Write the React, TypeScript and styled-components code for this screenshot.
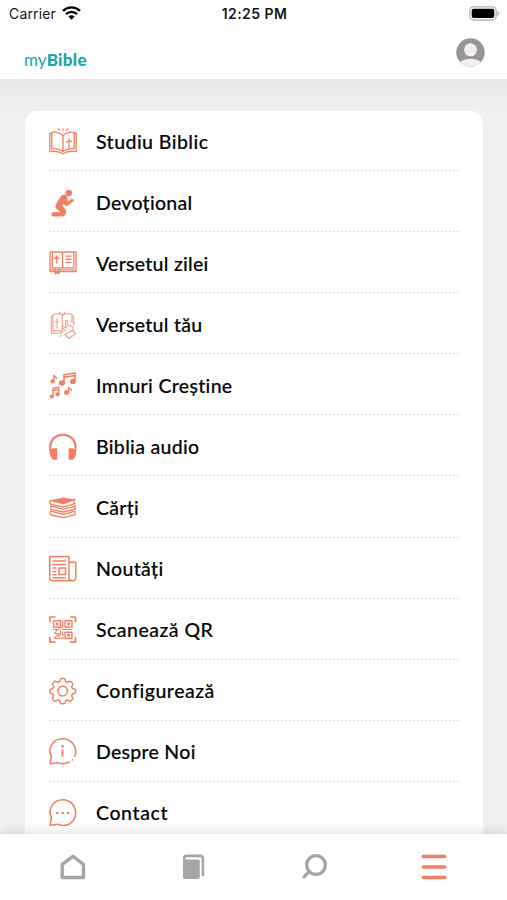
import React from "react";
import styled, { createGlobalStyle } from "styled-components";

const CORAL = "#f27f63";
const GREY = "#a6a6a6";

const GlobalStyle = createGlobalStyle`
  * { box-sizing: border-box; }
  body { margin: 0; background: #f0f0f0; overflow: hidden; }
`;

const Screen = styled.div`
  width: 507px;
  height: 900px;
  display: flex;
  flex-direction: column;
  overflow: hidden;
  background: #f0f0f0;
  font-family: Lato, "Open Sans", sans-serif;
`;

const Header = styled.header`
  flex: none;
  height: 79px;
  background: #fff;
`;

const StatusBar = styled.div`
  height: 27px;
  display: grid;
  grid-template-columns: 1fr auto 1fr;
  align-items: center;
  padding: 0 7px 0 9px;
  font-family: Inter, sans-serif;
  color: #161616;
`;

const Carrier = styled.div`
  display: flex;
  align-items: center;
  gap: 6px;
  font-size: 14px;
  letter-spacing: 0.15px;
  svg { margin-top: -2px; }
`;

const Clock = styled.div`
  font-size: 14px;
  font-weight: 600;
  letter-spacing: 0.45px;
`;

const Battery = styled.svg`
  justify-self: end;
  display: block;
  margin-top: -1px;
`;

const Brand = styled.div`
  height: 52px;
  display: flex;
  align-items: flex-start;
  justify-content: space-between;
  padding: 11px 22px 0 24px;
`;

const Logo = styled.div`
  padding-top: 11px;
  font-size: 17px;
  line-height: 21px;
  letter-spacing: 0.05px;
  color: #16a5ab;
  b { font-weight: 900; letter-spacing: 0.3px; }
`;

const Content = styled.main`
  flex: 1;
  min-height: 0;
  overflow: hidden;
  padding: 32px 24px 0 25px;
  background: linear-gradient(#e7e7e7 0, #ebebeb 12px, #f0f0f0 34px);
`;

const Card = styled.ul`
  margin: 0;
  padding: 0 24px;
  list-style: none;
  height: 760px;
  border-radius: 12px;
  background: #fff;
`;

const Row = styled.li`
  height: 61.1px;
  display: flex;
  align-items: center;
  gap: 19px;
  padding-top: 2px;
  background: repeating-linear-gradient(90deg, #d9d9d9 0 2px, #fff 2px 4px) 0 100% / 100% 1px no-repeat;
  &:first-child { height: 60px; }
  &:last-child { background: none; }
`;

const RowIcon = styled.svg`
  flex: none;
  display: block;
  width: 28px;
  height: 28px;
  fill: none;
  stroke: ${CORAL};
  stroke-width: 1.5;
  stroke-linecap: round;
  stroke-linejoin: round;
  overflow: visible;
  .solid { fill: ${CORAL}; stroke: none; }
  .faint { opacity: 0.75; }
`;

const Label = styled.span<{ $track: number }>`
  font-size: 19.5px;
  font-weight: 500;
  line-height: 26px;
  letter-spacing: ${(p) => p.$track}px;
  white-space: nowrap;
  color: #050505;
  -webkit-text-stroke: 0.15px #050505;
`;

const TabBar = styled.nav`
  flex: none;
  position: relative;
  height: 66px;
  display: grid;
  grid-template-columns: repeat(4, 120.4px);
  justify-content: center;
  padding-top: 18px;
  background: #fff;
  box-shadow: 0 -1px 10px rgba(0, 0, 0, 0.16);
`;

const Tab = styled.a<{ $active?: boolean }>`
  display: flex;
  justify-content: center;
  color: ${(p) => (p.$active ? CORAL : GREY)};
  svg { display: block; fill: none; stroke: currentColor; }
`;

const studyIcon = (
  <>
    <path d="M2.600 5.500H.8v18.200c4.500-1 9-.3 13.200 2 4.200-2.300 8.700-3 13.200-2V5.500h-1.800" strokeWidth="1.300" />
    <path d="M2.800 20.800V4.300C7.500 3.800 11.500 5 14 7.600c2.500-2.600 6.500-3.800 11.200-3.300v16.500C20 20 16.800 21.400 14 23.500 11.200 21.400 8 20 2.800 20.800zM14 7.600v16" strokeWidth="1.300" />
    <path d="M20 10.800v9M17.500 14l5.200-.8M14 .8v1.500M9 .6l1.600 1.700M19 .6l-1.600 1.700" strokeWidth="1.300" />
  </>
);

const prayIcon = (
  <>
    <circle className="solid" cx="19.800" cy="4" r="3.200" />
    <path className="solid" d="M13.200 6.300c2-1.500 4.400-.5 4.900 1.500l.7 4.600 3.900-2.300c1.500-.7 2.800.8 1.800 2.200l-5.800 4.500c-1.400.9-2.800.3-3.400-1l-.5-1.500-1.500 3 3.300 3.300c1.200 1.500.5 4-.9 5.700-.8 1-1.500 1.200-2.900 1.200H4.500c-2.700 0-2.700-4 0-4.200l6.800-.2-3.600-3.300c-1.600-1.500-1.500-2.800-.7-4.300 1.500-3 3.300-6.800 6.200-9.200z" />
  </>
);

const verseIcon = (
  <>
    <path d="M12.300 2H1v19.600h26V2H14.700L13.500 3.300zM13.500 3.300v14.500M3.300 2.300v15.500h21.500V2.300M1 19.800h26" strokeWidth="1.300" />
    <path d="M7.800 6.100v7M5.500 8.300h4.600M17 6.100h5.200M17 9.300h5.200M17 12.500h5.200M6.300 18.800v5l1.900-1.400 1.900 1.400v-5" strokeWidth="1.400" />
  </>
);

const yourVerseIcon = (
  <g className="faint" strokeWidth="1.100">
    <path d="M13.300 4.200C10 2.500 6.500 2.400 4 3.500v16.800c3-1.100 6-.9 9.300.6M13.300 4.200C16 2.500 20 2.400 23 3.500v8M13.300 4.200v16M4 5H2.300v17.300h10M23 5h1.700v9" />
    <path d="M8 8v9M6 10.700h4M10.500 1v2h5V1" />
    <path d="m16.500 20-2.800-3.200c-.8-1 .4-2 1.500-1.200l2.100 1.700-1-6.800c0-1.500 1.700-1.500 2 0l.9 4.500c2.300-1 4.400 0 4.600 1.600l.5 3.200M15.800 23.500l7.300-4 3.500 3-6.500 5z" />
    <circle className="solid" cx="11.700" cy="24.800" r=".9" />
  </g>
);

const musicIcon = (
  <>
    <path d="M15 11V2.800L26 1v8.500M15 5.200l11-1.700" strokeWidth="1.600" />
    <ellipse className="solid" cx="12.900" cy="11" rx="3.100" ry="2.700" />
    <ellipse className="solid" cx="23.800" cy="9.600" rx="2.900" ry="2.600" />
    <path d="M4.900 8.800V3.300c.6 1.500 2.500 1.300 2.500 3.300M4 24v-7.500l5.800-1.300v7M4 18.700l5.800-1.300M19.700 20.500v-5c.4 1.500 3 1 2.500 3" strokeWidth="1.400" />
    <circle className="solid" cx="3.500" cy="9.400" r="2.100" />
    <circle className="solid" cx="2.700" cy="24.500" r="2.100" />
    <circle className="solid" cx="8.500" cy="22.300" r="2.100" />
    <circle className="solid" cx="17.500" cy="20.600" r="2.500" />
  </>
);

const headphoneIcon = (
  <>
    <path d="M2.400 21C-1.300 9.500 4.500 1.800 13.900 1.800S29.100 9.500 25.400 21" strokeWidth="2.200" />
    <rect className="solid" x="3.500" y="15.200" width="4.700" height="11.600" rx=".8" />
    <rect className="solid" x="19.600" y="15.200" width="4.700" height="11.600" rx=".8" />
    <path className="solid" d="M4 15.500C1 15.800.2 18.600 1 21.700c.5 2 1.200 3.700 3 4.300zM23.800 15.500c3 .3 3.800 3.100 3 6.200-.5 2-1.200 3.700-3 4.300z" />
  </>
);

const booksIcon = (
  <>
    <path className="solid" d="m1.500 6.300 13-2.900 11.500 2-11.800 4.300z" />
    <path d="M1.500 6.300c-1 1.400-.8 2.900.4 4l12.300 2.600 12-3.300M26 5.400 14.200 9.700 1.500 6.300M24.900 6v3.800" strokeWidth="1.300" />
    <path d="M2.500 11.700c-1.500 1.200-1.200 3 0 4l12 2.300 12-3M2 12l12.500 3.200L26.200 12v3" strokeWidth="1.300" />
    <path d="M1.800 17c-1.200 1.300-1 3 .2 4l12.500 2.600 11.700-3M1.800 17.200l12.700 3.200L26 17.100v3.500" strokeWidth="1.300" />
  </>
);

const newsIcon = (
  <path d="M20 25.800H4c-2 0-3.200-1.300-3.200-3.300V1.500H20v21c0 4.300 6.800 4.300 6.800 0V7.200H20M23.500 25.800H20M4 6h12.500M4 9.500h12.500M10 13h6.500v6.400H10zM4 13h2.700M4 16.500h2.700M4 19.700h2.700M4 22.700h12.500" strokeWidth="1.500" />
);

const qrIcon = (
  <>
    <path d="M1 6.500V1h5.500M21 1h5.500v5.500M1 20.800v5.400h5.500M21 26.200h5.500v-5.400" strokeWidth="1.700" strokeLinecap="butt" />
    <path d="M4.500 4.700h7V11h-7zM16 4.700h7V11h-7zM16 16.200h7v6h-7zM7.300 7.200h1.400v1.300H7.300zM18.900 7.200h1.400v1.300h-1.400zM18.900 18.500h1.400v1.300h-1.400z" strokeWidth="1.400" />
    <path d="M4.500 13.500h5l1-1.300M8.500 13.500l-3 4h4.300l-4.500 4.700h6M11.500 14.800v3.500l-2 1.900M13.800 5v5.200l-1.300 2M13.500 13.500H23M13.500 16v3h1M12.800 22.200h2" strokeWidth="1.200" />
  </>
);

const gearIcon = (
  <g transform="translate(1.350 .6) scale(.9)">
    <path d="M12.200 1h3c.7 0 1 .4 1.200 1.100l.6 2.400 2.100.9 2.200-1.300c.6-.3 1-.3 1.500.2l1.900 1.900c.5.500.5 1 .2 1.500l-1.300 2.200.9 2.100 2.400.6c.7.200 1 .6 1 1.200v2.600c0 .7-.3 1-1 1.200l-2.400.6-.9 2.100 1.300 2.200c.3.600.3 1-.2 1.500l-1.900 1.900c-.5.500-1 .5-1.500.2l-2.200-1.300-2.100.9-.6 2.400c-.2.700-.5 1-1.200 1h-3c-.7 0-1-.3-1.200-1l-.6-2.400-2.100-.9-2.200 1.300c-.6.300-1 .3-1.500-.2l-1.900-1.900c-.5-.5-.5-1-.2-1.500l1.300-2.200-.9-2.100-2.400-.6c-.7-.2-1-.5-1-1.200v-2.600c0-.6.3-1 1-1.200l2.400-.6.9-2.100-1.300-2.200c-.3-.6-.3-1 .2-1.500l1.900-1.900c.5-.5 1-.5 1.500-.2l2.200 1.300 2.100-.9.600-2.400c.2-.7.500-1.100 1.200-1.100z" strokeWidth="1.600" />
    <circle cx="13.700" cy="15" r="5.400" strokeWidth="1.600" />
  </g>
);

const infoIcon = (
  <>
    <path d="M25.600 18.500c3.800-8.200-2.500-17.700-12-17.700C4 .8-2 10.500 2.500 18.700L1 25.800l8.300-1.100c3.700 1.600 7.500 1.200 10.900-.7M23.300 22l.2-.2" strokeWidth="1.600" />
    <path d="M13.500 11.500v7.200" strokeWidth="1.900" strokeLinecap="butt" />
    <circle className="solid" cx="13.500" cy="8.300" r="1.300" />
  </>
);

const contactIcon = (
  <>
    <path d="M2.500 18.600C-1.900 10.500 4.200.8 13.800.8c7.200 0 13 5.800 13 13 0 9.400-9.500 15.300-17.800 11.500L1 26.300z" strokeWidth="1.600" />
    <circle className="solid" cx="8.300" cy="14" r="1.300" />
    <circle className="solid" cx="13.700" cy="14" r="1.300" />
    <circle className="solid" cx="19.100" cy="14" r="1.300" />
  </>
);

const items = [
  { label: "Studiu Biblic", icon: studyIcon, track: 0.45 },
  { label: "Devoțional", icon: prayIcon, track: 0.27 },
  { label: "Versetul zilei", icon: verseIcon, track: 0.27 },
  { label: "Versetul tău", icon: yourVerseIcon, track: 0.27 },
  { label: "Imnuri Creștine", icon: musicIcon, track: 0.32 },
  { label: "Biblia audio", icon: headphoneIcon, track: 0.32 },
  { label: "Cărți", icon: booksIcon, track: 0.3 },
  { label: "Noutăți", icon: newsIcon, track: 0.35 },
  { label: "Scanează QR", icon: qrIcon, track: 0.48 },
  { label: "Configurează", icon: gearIcon, track: 0.5 },
  { label: "Despre Noi", icon: infoIcon, track: 0.27 },
  { label: "Contact", icon: contactIcon, track: 0.6 },
];

export default function App() {
  return (
    <Screen>
      <GlobalStyle />
      <Header>
        <StatusBar>
          <Carrier>
            <span>Carrier</span>
            <svg width="19" height="14" viewBox="0 0 19 14" fill="none" stroke="#000" strokeWidth="2.400">
              <path d="M1 4.900c4.900-4.700 12.100-4.700 17 0M4 8.100c3.200-3 7.800-3 11 0" />
              <path d="M6.400 10.600c1.700-1.700 4.500-1.700 6.200 0L9.500 13.800z" fill="#000" stroke="none" />
            </svg>
          </Carrier>
          <Clock>12:25 PM</Clock>
          <Battery width="31" height="15" viewBox="0 0 31 15">
            <rect x=".8" y=".8" width="26.400" height="13.200" rx="3.800" fill="#fff" stroke="#b4b4b4" strokeWidth="1.300" />
            <rect x="2.700" y="2.700" width="22.600" height="9.400" rx="2" />
            <path d="M28.500 5v5c2-.8 2-4.200 0-5z" fill="#aaa" />
          </Battery>
        </StatusBar>
        <Brand>
          <Logo>my<b>Bible</b></Logo>
          <svg width="29" height="29" viewBox="0 0 29 29">
            <circle cx="14.500" cy="14.500" r="14.200" fill="#999596" />
            <circle cx="14.500" cy="11.800" r="6.500" fill="#f2f0ef" />
            <path d="M4 24c4.500-4.500 16.500-4.500 21 0-5.500 6.200-15.500 6.200-21 0z" fill="#f2eeed" />
          </svg>
        </Brand>
      </Header>
      <Content>
        <Card>
          {items.map((item) => (
            <Row key={item.label}>
              <RowIcon viewBox="0 0 28 28">{item.icon}</RowIcon>
              <Label $track={item.track}>{item.label}</Label>
            </Row>
          ))}
        </Card>
      </Content>
      <TabBar>
        <Tab>
          <svg width="28" height="30" viewBox="0 0 28 30" strokeWidth="3.400" strokeLinejoin="round">
            <path d="M3.200 12.300 14 4.300l10.500 8v13.200H3.200z" />
          </svg>
        </Tab>
        <Tab>
          <svg width="24" height="30" viewBox="0 0 24 30" strokeWidth="2.600" strokeLinecap="round">
            <rect x="2" y="7.500" width="16.800" height="19.500" rx="2" fill="currentColor" stroke="none" />
            <path d="M3.300 9V5.800c0-1.200.8-1.900 2-1.900h14c1.600 0 2.600 1 2.600 2.600V23" />
          </svg>
        </Tab>
        <Tab>
          <svg width="28" height="30" viewBox="0 0 28 30" strokeWidth="3.300" strokeLinecap="round">
            <circle cx="16" cy="13" r="9.300" />
            <path d="m9 19.900-5 5" />
          </svg>
        </Tab>
        <Tab $active>
          <svg width="26" height="30" viewBox="0 0 26 30" strokeWidth="3.500" strokeLinecap="round">
            <path d="M2.300 4.600h21.400M2.300 15h21.400M2.300 25.400h21.400" />
          </svg>
        </Tab>
      </TabBar>
    </Screen>
  );
}
